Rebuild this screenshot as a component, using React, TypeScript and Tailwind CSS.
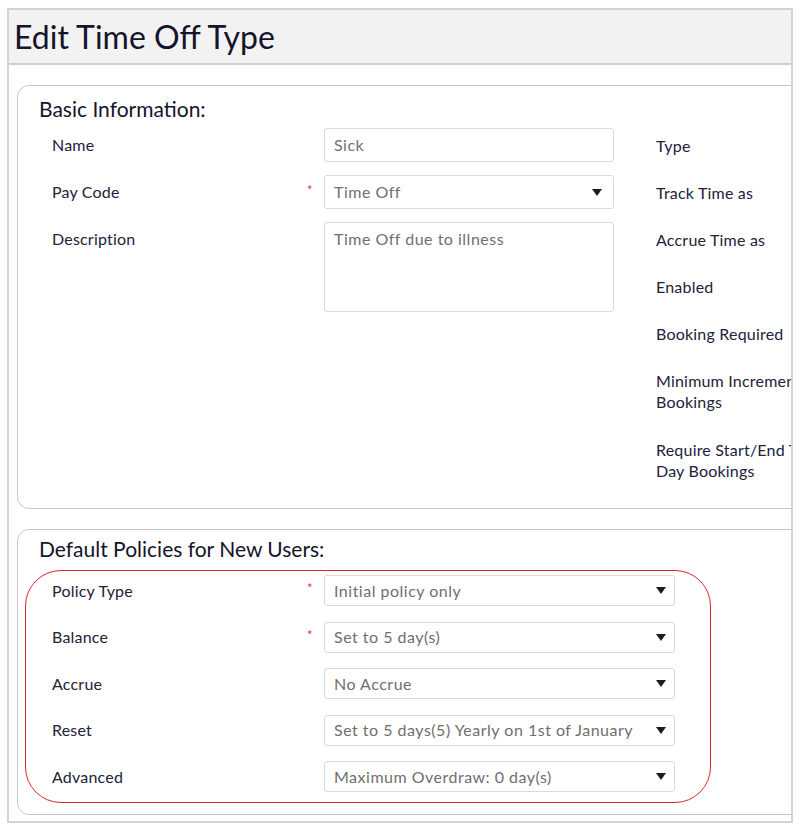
import React from "react";

const font = { fontFamily: "Lato, 'Noto Sans', sans-serif" };

function Arrow({ className = "" }: { className?: string }) {
  return (
    <svg width="10" height="7" viewBox="0 0 10 7" className={className}>
      <path d="M0 0 L10 0 L5 7 Z" fill="#1c1c1c" />
    </svg>
  );
}

function Star({ show }: { show?: boolean }) {
  return (
    <div className="w-[17px] shrink-0 text-[13px] leading-none text-[#e0363a] -mt-[4px]">
      {show ? "*" : ""}
    </div>
  );
}

const basicRight = ["Type", "Track Time as", "Accrue Time as", "Enabled", "Booking Required"];

const policies = [
  { label: "Policy Type", value: "Initial policy only", required: true },
  { label: "Balance", value: "Set to 5 day(s)", required: true },
  { label: "Accrue", value: "No Accrue" },
  { label: "Reset", value: "Set to 5 days(5) Yearly on 1st of January" },
  { label: "Advanced", value: "Maximum Overdraw: 0 day(s)" },
];

export default function App() {
  return (
    <div className="relative w-[800px] h-[834px] bg-white pt-[8px] px-[7px]" style={font}>
      <div className="h-[815px] border-2 border-[#d3d3d3] overflow-hidden">
        {/* Header */}
        <div className="h-[55px] bg-[#f2f2f2] border-b-2 border-[#cfcfcf] flex items-center pl-[5px]">
          <h1 className="text-[32px] leading-none text-[#14142a] whitespace-nowrap">Edit Time Off Type</h1>
        </div>

        {/* Basic information */}
        <div className="mt-[20px] ml-[8px] w-[820px] h-[424px] border border-[#c6c6c6] rounded-[12px] pt-[10px] pl-[21px]">
          <h2 className="text-[21px] leading-[26px] text-[#14142a]">Basic Information:</h2>
          <div className="flex mt-[6px] pl-[13px]">
            <div className="flex flex-col gap-[13px]">
              <div className="flex items-center">
                <div className="w-[255px] text-[16px] leading-[20px] tracking-[0.2px] text-[#22223a]">Name</div>
                <Star />
                <div className="w-[290px] h-[34px] border border-[#d9d9d9] rounded-[3px] flex items-center pl-[9px] text-[16px] tracking-[0.5px] text-[#6f6f6f]">
                  Sick
                </div>
              </div>
              <div className="flex items-center">
                <div className="w-[255px] text-[16px] leading-[20px] tracking-[0.2px] text-[#22223a]">Pay Code</div>
                <Star show />
                <div className="w-[290px] h-[34px] border border-[#d9d9d9] rounded-[3px] flex items-center justify-between pl-[9px] pr-[11px] text-[16px] tracking-[0.5px] text-[#6f6f6f]">
                  <span>Time Off</span>
                  <Arrow />
                </div>
              </div>
              <div className="flex items-start">
                <div className="w-[255px] mt-[7px] text-[16px] leading-[20px] tracking-[0.2px] text-[#22223a]">Description</div>
                <Star />
                <div className="w-[290px] h-[90px] border border-[#d9d9d9] rounded-[3px] pl-[9px] pt-[6px] text-[16px] leading-[20px] tracking-[0.5px] text-[#6f6f6f]">
                  Time Off due to illness
                </div>
              </div>
            </div>

            <div className="ml-[42px] flex flex-col text-[16px] leading-[21px] tracking-[0.2px] text-[#22223a] whitespace-nowrap">
              {basicRight.map((l) => (
                <div key={l} className="h-[34px] mb-[13px] flex items-center">
                  {l}
                </div>
              ))}
              <div className="mt-[7px]">
                Minimum Increment for
                <br />
                Bookings
              </div>
              <div className="mt-[27px]">
                Require Start/End Time for Full
                <br />
                Day Bookings
              </div>
            </div>
          </div>
        </div>

        {/* Default policies */}
        <div className="mt-[20px] ml-[8px] w-[820px] h-[286px] border border-[#c6c6c6] rounded-[12px] pt-[6px] pl-[21px]">
          <h2 className="text-[21px] leading-[26px] text-[#14142a]">Default Policies for New Users:</h2>
          <div className="mt-[13px] pl-[13px] flex flex-col gap-[15.5px]">
            {policies.map((p) => (
              <div key={p.label} className="flex items-center">
                <div className="w-[255px] text-[16px] leading-[20px] tracking-[0.2px] text-[#22223a]">{p.label}</div>
                <Star show={p.required} />
                <div className="w-[351px] h-[31px] border border-[#d9d9d9] rounded-[3px] flex items-center justify-between pl-[9px] pr-[8px] text-[16px] tracking-[0.5px] text-[#6f6f6f]">
                  <span className="whitespace-nowrap">{p.value}</span>
                  <Arrow />
                </div>
              </div>
            ))}
          </div>
        </div>
      </div>

      {/* Red highlight annotation */}
      <div className="absolute left-[25px] top-[570px] w-[686px] h-[233px] rounded-[36px] border-[1.5px] border-[#d9262b] pointer-events-none" />
    </div>
  );
}
